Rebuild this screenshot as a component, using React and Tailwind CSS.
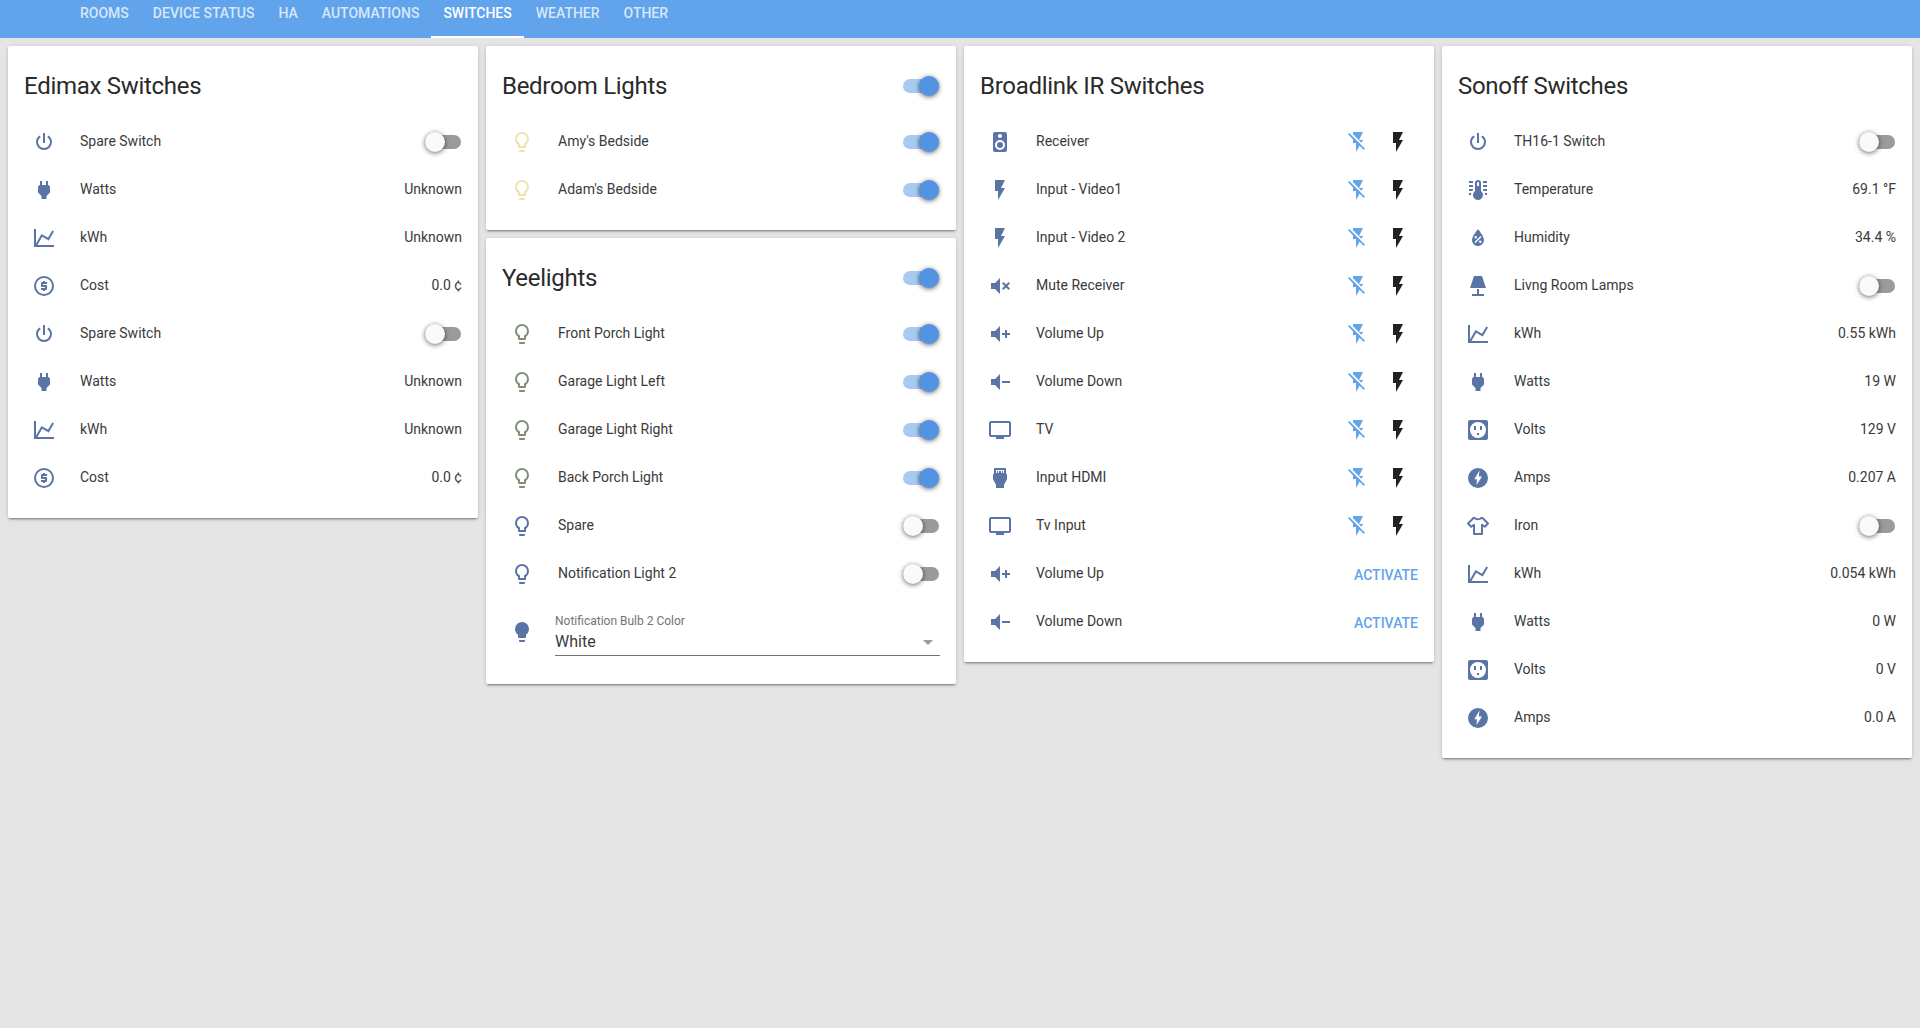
import React from 'react';

// Material Design Icons paths
const mdi = {
  power: 'M16.56,5.44L15.11,6.89C16.84,7.94 18,9.83 18,12A6,6 0 0,1 12,18A6,6 0 0,1 6,12C6,9.83 7.16,7.94 8.88,6.88L7.44,5.44C5.36,6.88 4,9.28 4,12A8,8 0 0,0 12,20A8,8 0 0,0 20,12C20,9.28 18.64,6.88 16.56,5.44M13,3H11V13H13',
  plug: 'M16,7V3H14V7H10V3H8V7H8C7,7 6,8 6,9V14.5L9.5,18V21H14.5V18L18,14.5V9C18,8 17,7 16,7Z',
  chart: 'M16,11.78L20.24,4.45L21.97,5.45L16.74,14.5L10.23,10.75L5.46,19H22V21H2V3H4V17.54L9.5,8L16,11.78Z',
  usd: 'M11,17V16H9V14H13V13H10A1,1 0 0,1 9,12V9A1,1 0 0,1 10,8H11V7H13V8H15V10H11V11H14A1,1 0 0,1 15,12V15A1,1 0 0,1 14,16H13V17H11M12,2A10,10 0 0,1 22,12A10,10 0 0,1 12,22A10,10 0 0,1 2,12A10,10 0 0,1 12,2M12,4A8,8 0 0,0 4,12A8,8 0 0,0 12,20A8,8 0 0,0 20,12A8,8 0 0,0 12,4Z',
  bulbOutline: 'M12,2A7,7 0 0,1 19,9C19,11.38 17.81,13.47 16,14.74V17A1,1 0 0,1 15,18H9A1,1 0 0,1 8,17V14.74C6.19,13.47 5,11.38 5,9A7,7 0 0,1 12,2M9,21V20H15V21A1,1 0 0,1 14,22H10A1,1 0 0,1 9,21M12,4A5,5 0 0,0 7,9C7,11.05 8.23,12.81 10,13.58V16H14V13.58C15.77,12.81 17,11.05 17,9A5,5 0 0,0 12,4Z',
  bulb: 'M12,2A7,7 0 0,0 5,9C5,11.38 6.19,13.47 8,14.74V17A1,1 0 0,0 9,18H15A1,1 0 0,0 16,17V14.74C17.81,13.47 19,11.38 19,9A7,7 0 0,0 12,2M9,21A1,1 0 0,0 10,22H14A1,1 0 0,0 15,21V20H9V21Z',
  flash: 'M7,2V13H10V22L17,10H13L17,2H7Z',
  flashOff: 'M17,10H13L17,2H7V4.18L15.46,12.64M3.27,3L2,4.27L7,9.27V13H10V22L13.58,15.86L17.73,20L19,18.73L3.27,3Z',
  speaker: 'M12,12A3,3 0 0,0 9,15A3,3 0 0,0 12,18A3,3 0 0,0 15,15A3,3 0 0,0 12,12M12,20A5,5 0 0,1 7,15A5,5 0 0,1 12,10A5,5 0 0,1 17,15A5,5 0 0,1 12,20M12,4A2,2 0 0,1 14,6A2,2 0 0,1 12,8C10.89,8 10,7.1 10,6C10,4.89 10.89,4 12,4M17,2H7C5.89,2 5,2.89 5,4V20A2,2 0 0,0 7,22H17A2,2 0 0,0 19,20V4C19,2.89 18.1,2 17,2Z',
  volPlus: 'M3,9H7L12,4V20L7,15H3V9M14,11H17V8H19V11H22V13H19V16H17V13H14V11Z',
  volMinus: 'M3,9H7L12,4V20L7,15H3V9M14,11H22V13H14V11Z',
  volMute: 'M3,9H7L12,4V20L7,15H3V9M16.59,12L14,9.41L15.41,8L18,10.59L20.59,8L22,9.41L19.41,12L22,14.59L20.59,16L18,13.41L15.41,16L14,14.59L16.59,12Z',
  tv: 'M21,17H3V5H21M21,3H3A2,2 0 0,0 1,5V17A2,2 0 0,0 3,19H8V21H16V19H21A2,2 0 0,0 23,17V5C23,3.89 22.1,3 21,3Z',
  hdmi: 'M7,2H17A1,1 0 0,1 18,3V8H19V13L16,19V22H8V19L5,13V8H6V3A1,1 0 0,1 7,2M8,4V7H9V5H10V7H11V5H13V7H14V5H15V7H16V4H8Z',
  thermo: 'M17,3H21V5H17V3M17,7H21V9H17V7M17,11H21V13H17.75L17,12.1V11M21,15V17H19C19,16.31 18.9,15.63 18.71,15H21M7,3V5H3V3H7M7,7V9H3V7H7M7,11V12.1L6.25,13H3V11H7M3,15H5.29C5.1,15.63 5,16.31 5,17H3V15M15,13V5A3,3 0 0,0 12,2A3,3 0 0,0 9,5V13C6.79,14.66 6.34,17.79 8,20S12.79,22.66 15,21 17.66,16.21 16,14C15.72,13.62 15.38,13.28 15,13M12,4A1,1 0 0,1 13,5V8H11V5A1,1 0 0,1 12,4Z',
  water: 'M12,3.25C12,3.25 6,10 6,14C6,17.32 8.69,20 12,20A6,6 0 0,0 18,14C18,10 12,3.25 12,3.25M14.47,9.97L15.53,11.03L9.53,17.03L8.47,15.97M9.75,10A1.25,1.25 0 0,1 11,11.25A1.25,1.25 0 0,1 9.75,12.5A1.25,1.25 0 0,1 8.5,11.25A1.25,1.25 0 0,1 9.75,10M14.25,14.5A1.25,1.25 0 0,1 15.5,15.75A1.25,1.25 0 0,1 14.25,17A1.25,1.25 0 0,1 13,15.75A1.25,1.25 0 0,1 14.25,14.5Z',
  lamp: 'M8,2H16L20,14H4L8,2M11,15H13V20H18V22H6V20H11V15Z',
  socket: 'M4,2H20A2,2 0 0,1 22,4V20A2,2 0 0,1 20,22H4A2,2 0 0,1 2,20V4A2,2 0 0,1 4,2Z M12,4A8,8 0 1,0 12,20A8,8 0 1,0 12,4Z M8,8H10V12H8Z M14,8H16V12H14Z M11,15H13V17H11Z',
  flashCircle: 'M12,2A10,10 0 1,0 12,22A10,10 0 1,0 12,2Z M13.5,4.5L8.3,13.2H11L10.5,19L16,10.5H12.8L13.5,4.5Z',
};

const tabs = ['Rooms', 'Device Status', 'HA', 'Automations', 'Switches', 'Weather', 'Other'];

function Icon({ d, className = 'text-[#5a75a5]' }) {
  return (
    <svg viewBox="0 0 24 24" className={`w-6 h-6 fill-current ${className}`} fillRule="evenodd">
      <path d={d} />
    </svg>
  );
}

// no plain mdi path to hand for this one, drawn as an outline
function Shirt() {
  return (
    <svg viewBox="0 0 24 24" className="w-6 h-6 text-[#5a75a5]" fill="none" stroke="currentColor" strokeWidth="2" strokeLinejoin="round">
      <path d="M7.5,4H9C9.5,5.6 14.5,5.6 15,4H16.5L22,9.5L18.8,12.7L16,10.7V20H8V10.7L5.2,12.7L2,9.5Z" />
    </svg>
  );
}

function Toggle({ on }) {
  return (
    <div className={`relative w-9 h-3.5 mr-px rounded-full ${on ? 'bg-[#a9cbf1]' : 'bg-[#9b9b9b]'}`}>
      <div
        className={`absolute -top-[3px] w-5 h-5 rounded-full shadow-[0_1px_5px_0_rgba(0,0,0,0.6)] ${
          on ? 'right-0 bg-[#5294e2]' : 'left-0 bg-[#fafafa]'
        }`}
      />
    </div>
  );
}

function Row({ icon, color, label, value, toggle, on, ir, activate, custom }) {
  return (
    <div className="flex items-center h-12">
      <div className="w-10 mr-4 mt-0.5 flex justify-center shrink-0">
        {custom ? custom : <Icon d={icon} className={color} />}
      </div>
      <div className="flex-1 text-sm text-[#3a3a3a]">{label}</div>
      {value && <div className="text-sm text-[#3a3a3a]">{value}</div>}
      {toggle && <div className="mt-0.5"><Toggle on={on} /></div>}
      {ir && (
        <div className="flex mt-0.5">
          <div className="w-10 flex justify-center">
            <Icon d={mdi.flashOff} className="text-[#62a4ec]" />
          </div>
          <div className="w-10 flex justify-center">
            <Icon d={mdi.flash} className="text-[#212121]" />
          </div>
        </div>
      )}
      {activate && <div className="mt-1 text-sm font-medium text-[#62a4ec]">ACTIVATE</div>}
    </div>
  );
}

function Card({ title, on, children }) {
  return (
    <div className="bg-white rounded-[2px] px-4 pt-6 pb-[17px] shadow-[0_2px_2px_0_rgba(0,0,0,0.14),0_1px_5px_0_rgba(0,0,0,0.12),0_3px_1px_-2px_rgba(0,0,0,0.2)]">
      <div className="flex items-center justify-between h-8 mb-[15px]">
        <div className="text-2xl tracking-[-0.012em] text-[#2a2a2a]">{title}</div>
        {on && <Toggle on />}
      </div>
      {children}
    </div>
  );
}

const amber = 'text-[#efe2b5]';
const sage = 'text-[#7f9175]';

export default function App() {
  return (
    <div className="min-h-[1028px] bg-[#e5e5e5] font-['Roboto',sans-serif]">
      {/* Tabs */}
      <div className="flex h-[38px] pl-[68px] bg-[#62a4ec]">
        {tabs.map((t) => (
          <div
            key={t}
            className={`px-3 h-full text-sm leading-[26px] font-medium uppercase ${
              t === 'Switches' ? 'text-white border-b-2 border-white' : 'text-white/75'
            }`}
          >
            {t}
          </div>
        ))}
      </div>

      <div className="grid grid-cols-4 gap-2 p-2 items-start">
        <Card title="Edimax Switches">
          <Row icon={mdi.power} label="Spare Switch" toggle />
          <Row icon={mdi.plug} label="Watts" value="Unknown" />
          <Row icon={mdi.chart} label="kWh" value="Unknown" />
          <Row icon={mdi.usd} label="Cost" value="0.0 ¢" />
          <Row icon={mdi.power} label="Spare Switch" toggle />
          <Row icon={mdi.plug} label="Watts" value="Unknown" />
          <Row icon={mdi.chart} label="kWh" value="Unknown" />
          <Row icon={mdi.usd} label="Cost" value="0.0 ¢" />
        </Card>

        <div className="flex flex-col gap-2">
          <Card title="Bedroom Lights" on>
            <Row icon={mdi.bulbOutline} color={amber} label="Amy's Bedside" toggle on />
            <Row icon={mdi.bulbOutline} color={amber} label="Adam's Bedside" toggle on />
          </Card>
          <Card title="Yeelights" on>
            <Row icon={mdi.bulbOutline} color={sage} label="Front Porch Light" toggle on />
            <Row icon={mdi.bulbOutline} color={sage} label="Garage Light Left" toggle on />
            <Row icon={mdi.bulbOutline} color={sage} label="Garage Light Right" toggle on />
            <Row icon={mdi.bulbOutline} color={sage} label="Back Porch Light" toggle on />
            <Row icon={mdi.bulbOutline} label="Spare" toggle />
            <Row icon={mdi.bulbOutline} label="Notification Light 2" toggle />
            {/* Select */}
            <div className="flex h-[70px]">
              <div className="w-10 mr-[13px] flex justify-center pt-[23px] shrink-0">
                <Icon d={mdi.bulb} />
              </div>
              <div className="flex-1 pt-4">
                <div className="text-xs leading-4 text-[#737373]">Notification Bulb 2 Color</div>
                <div className="relative mt-px h-[26px] border-b border-[#737373] text-base leading-6 text-[#3a3a3a]">
                  White
                  <div className="absolute right-[7px] top-[10px] w-0 h-0 border-x-[5px] border-x-transparent border-t-[5px] border-t-[#9b9b9b]" />
                </div>
              </div>
            </div>
          </Card>
        </div>

        <Card title="Broadlink IR Switches">
          <Row icon={mdi.speaker} label="Receiver" ir />
          <Row icon={mdi.flash} label="Input - Video1" ir />
          <Row icon={mdi.flash} label="Input - Video 2" ir />
          <Row icon={mdi.volMute} label="Mute Receiver" ir />
          <Row icon={mdi.volPlus} label="Volume Up" ir />
          <Row icon={mdi.volMinus} label="Volume Down" ir />
          <Row icon={mdi.tv} label="TV" ir />
          <Row icon={mdi.hdmi} label="Input HDMI" ir />
          <Row icon={mdi.tv} label="Tv Input" ir />
          <Row icon={mdi.volPlus} label="Volume Up" activate />
          <Row icon={mdi.volMinus} label="Volume Down" activate />
        </Card>

        <Card title="Sonoff Switches">
          <Row icon={mdi.power} label="TH16-1 Switch" toggle />
          <Row icon={mdi.thermo} label="Temperature" value="69.1 °F" />
          <Row icon={mdi.water} label="Humidity" value="34.4 %" />
          <Row icon={mdi.lamp} label="Livng Room Lamps" toggle />
          <Row icon={mdi.chart} label="kWh" value="0.55 kWh" />
          <Row icon={mdi.plug} label="Watts" value="19 W" />
          <Row icon={mdi.socket} label="Volts" value="129 V" />
          <Row icon={mdi.flashCircle} label="Amps" value="0.207 A" />
          <Row custom={<Shirt />} label="Iron" toggle />
          <Row icon={mdi.chart} label="kWh" value="0.054 kWh" />
          <Row icon={mdi.plug} label="Watts" value="0 W" />
          <Row icon={mdi.socket} label="Volts" value="0 V" />
          <Row icon={mdi.flashCircle} label="Amps" value="0.0 A" />
        </Card>
      </div>
    </div>
  );
}
